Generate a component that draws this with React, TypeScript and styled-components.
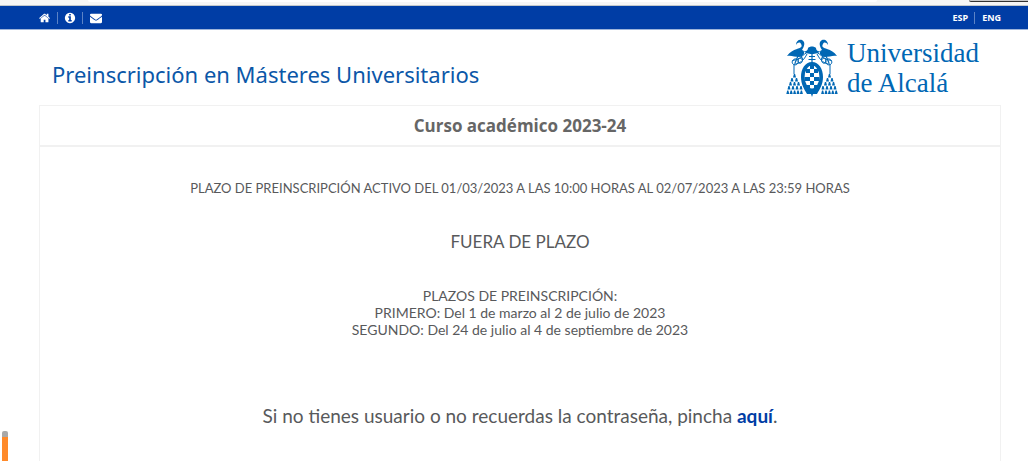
import React from "react";
import styled, { createGlobalStyle } from "styled-components";

const GlobalStyle = createGlobalStyle`
  *, *::before, *::after { box-sizing: border-box; }
  html, body, #root { height: 100%; }
  body {
    margin: 0;
    background: #fff;
    color: #58595b;
    font-family: Lato, "Open Sans", sans-serif;
    overflow: hidden;
  }
`;

const Page = styled.div`
  min-height: 100%;
  display: flex;
  flex-direction: column;
`;

const WindowEdge = styled.div`
  display: flex;
  justify-content: space-between;
  height: 6px;
  padding-left: 88px;
  background: #f6f6f6;
  border-bottom: 1px solid #c2c8cc;
  overflow: hidden;
`;

const AddressEdge = styled.div`
  flex: 1;
  height: 2px;
  margin-right: 92px;
  background: #fff;
  border-radius: 0 0 8px 8px;
`;

const ButtonEdge = styled.div`
  width: 59px;
  height: 2px;
  background: #c8c8c8;
  border-bottom: 1px solid #333;
  border-radius: 0 0 0 4px;
`;

const TopBar = styled.nav`
  display: flex;
  justify-content: space-between;
  align-items: center;
  height: 24px;
  padding: 0 27px 0 39px;
  background: #003da5;
  border-bottom: 1px solid #9db4da;
`;

const LinkGroup = styled.div`
  display: flex;
  align-items: center;
`;

const BarLink = styled.a`
  display: flex;
  align-items: center;
  height: 12px;
  padding: 0 6px;
  color: #fff;
  font: 700 9px/12px "Noto Sans", sans-serif;
  text-decoration: none;
  & + & { border-left: 1px solid #5c83c6; }
  &:first-child { padding-left: 0; }
  &:last-child { padding-right: 0; padding-left: 7px; }
`;

const Glyph = styled.svg<{ $size: number }>`
  width: ${(p) => p.$size}px;
  height: ${(p) => p.$size}px;
  fill: currentColor;
`;

const Header = styled.header`
  display: flex;
  justify-content: space-between;
  align-items: center;
  height: 75px;
  padding: 0 49px 0 52px;
`;

const Title = styled.h1`
  margin: 12px 0 0;
  color: #0b57a8;
  font: 400 22px/30px "Noto Sans", sans-serif;
`;

const Brand = styled.a`
  display: flex;
  align-items: center;
  gap: 9px;
  color: #0067b4;
  text-decoration: none;
`;

const Crest = styled.svg`
  width: 52px;
  height: 58px;
`;

const BrandName = styled.span`
  font: 400 27px/30px "Liberation Serif", serif;
`;

const Panel = styled.main`
  flex: 1;
  margin: 0 27px 0 39px;
  border: 1px solid #f1f1f1;
  border-bottom: 0;
  text-align: center;
`;

const PanelTitle = styled.h2`
  margin: 0;
  padding: 8px 0 7px;
  border-bottom: 2px solid #f1f1f1;
  color: #666;
  font: 700 17px/24px "Open Sans", sans-serif;
`;

const PanelBody = styled.div`
  display: flex;
  flex-direction: column;
  padding-top: 33px;
`;

const sizes = { small: 13, medium: 14, large: 17, xlarge: 19 };

const Text = styled.p<{ $size: keyof typeof sizes }>`
  margin: 0;
  font-size: ${(p) => sizes[p.$size]}px;
  line-height: ${(p) => (sizes[p.$size] > 14 ? 24 : 17)}px;
`;

const Status = styled(Text)`
  margin: 33px 0;
`;

const Help = styled(Text)`
  margin-top: 66px;
`;

const HelpLink = styled.a`
  color: #003da5;
  font-weight: 700;
  text-decoration: none;
`;

const Pencil = styled.div`
  position: fixed;
  left: 2px;
  bottom: 0;
  width: 6px;
  height: 30px;
  border-top: 6px solid #a9a9a9;
  border-radius: 2px 2px 0 0;
  background: #ff8a2a;
`;

const icons = {
  home: "M1408 992v480q0 26-19 45t-45 19h-384v-384h-256v384h-384q-26 0-45-19t-19-45v-480q0-1 .5-3t.5-3l575-474 575 474q1 2 1 6zm223-69l-62 74q-8 9-21 11h-3q-13 0-21-7l-692-577-692 577q-12 8-24 7-13-2-21-11l-62-74q-8-10-7-23.5t11-21.5l719-599q32-26 76-26t76 26l244 204v-195q0-14 9-23t23-9h192q14 0 23 9t9 23v408l219 182q10 8 11 21.5t-7 23.5z",
  info: "M1152 1376v-160q0-14-9-23t-23-9h-96v-512q0-14-9-23t-23-9h-320q-14 0-23 9t-9 23v160q0 14 9 23t23 9h96v320h-96q-14 0-23 9t-9 23v160q0 14 9 23t23 9h448q14 0 23-9t9-23zm-128-896v-160q0-14-9-23t-23-9h-192q-14 0-23 9t-9 23v160q0 14 9 23t23 9h192q14 0 23-9t9-23zm640 416q0 209-103 385.5t-279.5 279.5-385.5 103-385.5-103-279.5-279.5-103-385.5 103-385.5 279.5-279.5 385.5-103 385.5 103 279.5 279.5 103 385.5z",
  mail: "M1792 710v794q0 66-47 113t-113 47h-1472q-66 0-113-47t-47-113v-794q44 49 101 87 362 246 497 345 57 42 92.5 65.5t94.5 48 110 24.5h2q51 0 110-24.5t94.5-48 92.5-65.5q170-123 498-345 57-39 100-87zm0-294q0 79-49 151t-122 123q-376 261-468 325-10 7-42.5 31t-54 38.5-52 32.5-57.5 27-50 9h-2q-23 0-50-9t-57.5-27-52-32.5-54-38.5-42.5-31q-91-64-262-182.5t-205-142.5q-62-42-117-115.5t-55-136.5q0-78 41.5-130t118.5-52h1472q65 0 112.5 47t47.5 113z",
};

function Icon({ name, size = 12 }: { name: keyof typeof icons; size?: number }) {
  return (
    <Glyph $size={size} viewBox="0 0 1792 1792" aria-hidden="true">
      <path d={icons[name]} />
    </Glyph>
  );
}

const tasselRows = [
  { y: 37, xs: [8.5] },
  { y: 41, xs: [6, 10.5] },
  { y: 45, xs: [4.5, 8.5, 12.5] },
  { y: 49, xs: [3, 7, 11, 15] },
  { y: 53.5, xs: [1.8, 5.2, 8.6, 12, 15.4] },
];

function CrestHalf() {
  return (
    <g>
      <path d="M1 17 C4 13 7 11 11 10 C14 9 17 8 15 5 C14 3 12 3 10 6 C10 2 13 0 16 1 C20 3 18 8 16 11 C20 12 18 18 13 18 C9 18 5 16 1 17Z" fill="currentColor" />
      <path d="M12 17 L9 24 M15 17 L17 21" stroke="currentColor" strokeWidth="1.2" />
      <path d="M22 13 C17 15 13 22 7 21 C4 25 10 28 12 24 C14 20 8 18 7 22 M21 15 C18 21 14 25 8 25 M12 20 C16 18 18 22 15 24 C12 25 11 22 13 20 M8 25 V35" fill="none" stroke="currentColor" strokeWidth="1" />
      {tasselRows.map((row) =>
        row.xs.map((x) => (
          <path key={`${row.y}-${x}`} d={`M${x - 0.6} ${row.y - 2} h1.2 l.9 3.4 h-3z`} fill="currentColor" />
        )),
      )}
    </g>
  );
}

function UniversityCrest() {
  return (
    <Crest viewBox="0 0 52 58" aria-hidden="true">
      <CrestHalf />
      <g transform="translate(52 0) scale(-1 1)">
        <CrestHalf />
      </g>
      <path d="M18 12 C20 13 22 11 22 9 C24 7 28 7 30 9 C30 11 32 13 34 12 C33 16 19 16 18 12Z" fill="currentColor" />
      <path d="M26 15 V24 M23 17.5 H29 M22.5 20.5 H29.5" stroke="currentColor" strokeWidth="1.2" />
      <path d="M26 23 C33 23 37 30 37 38 C37 45 34 50 31 55 H27 L26 58 L25 55 H21 C18 50 15 45 15 38 C15 30 19 23 26 23Z" fill="currentColor" />
      <ellipse cx="26" cy="38" rx="7.4" ry="11.4" fill="#fff" />
      <path d="M24 26 h4 v4 h-4z M20 30 h4 v4 h-4z M28 30 h4 v4 h-4z M24 34 h4 v4 h-4z M18.5 38 h5.5 v4 h-5z M28 38 h5.5 l-.5 4 h-5z M24 42 h4 v4 h-4z M20 46 h4 v3 h-3z M28 46 h4 l-1 3 h-3z" fill="currentColor" />
    </Crest>
  );
}

export default function App() {
  return (
    <>
      <GlobalStyle />
      <Page>
        <WindowEdge>
          <AddressEdge />
          <ButtonEdge />
        </WindowEdge>
        <TopBar>
          <LinkGroup>
            <BarLink href="#inicio" aria-label="Inicio"><Icon name="home" /></BarLink>
            <BarLink href="#info" aria-label="Información"><Icon name="info" /></BarLink>
            <BarLink href="#contacto" aria-label="Contacto"><Icon name="mail" /></BarLink>
          </LinkGroup>
          <LinkGroup>
            <BarLink href="#esp">ESP</BarLink>
            <BarLink href="#eng">ENG</BarLink>
          </LinkGroup>
        </TopBar>
        <Header>
          <Title>Preinscripción en Másteres Universitarios</Title>
          <Brand href="#uah">
            <UniversityCrest />
            <BrandName>Universidad<br />de Alcalá</BrandName>
          </Brand>
        </Header>
        <Panel>
          <PanelTitle>Curso académico 2023-24</PanelTitle>
          <PanelBody>
            <Text $size="small">PLAZO DE PREINSCRIPCIÓN ACTIVO DEL 01/03/2023 A LAS 10:00 HORAS AL 02/07/2023 A LAS 23:59 HORAS</Text>
            <Status $size="large">FUERA DE PLAZO</Status>
            <Text $size="medium">
              PLAZOS DE PREINSCRIPCIÓN:<br />
              PRIMERO: Del 1 de marzo al 2 de julio de 2023<br />
              SEGUNDO: Del 24 de julio al 4 de septiembre de 2023
            </Text>
            <Help $size="xlarge">
              Si no tienes usuario o no recuerdas la contraseña, pincha <HelpLink href="#aqui">aquí</HelpLink>.
            </Help>
          </PanelBody>
        </Panel>
      </Page>
      <Pencil aria-hidden="true" />
    </>
  );
}
